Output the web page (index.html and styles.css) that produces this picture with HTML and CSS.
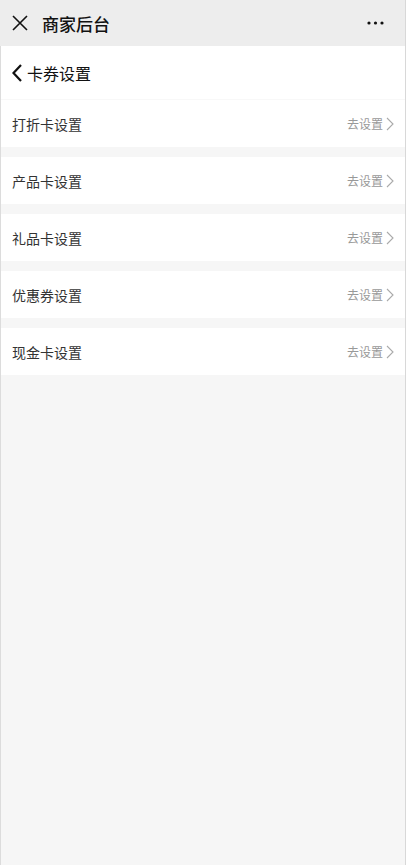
FILE: index.html
```html
<!DOCTYPE html>
<html lang="zh-CN">
  <head>
    <meta charset="UTF-8" />
    <meta name="viewport" content="width=device-width, initial-scale=1.0" />
    <title>商家后台</title>
    <link rel="stylesheet" href="styles.css">
  </head>
  <body>
    <div class="app">
      <div class="top-bar">
        <svg class="close-icon" width="16" height="16" viewBox="0 0 16 16">
          <path d="M1 1 L15 15 M15 1 L1 15" stroke="#111" stroke-width="1.6" fill="none" />
        </svg>
        <span class="top-title">商家后台</span>
        <svg class="more-icon" width="17" height="4" viewBox="0 0 17 4">
          <circle cx="2" cy="2" r="1.6" fill="#111" />
          <circle cx="8.5" cy="2" r="1.6" fill="#111" />
          <circle cx="15" cy="2" r="1.6" fill="#111" />
        </svg>
      </div>
      <div class="content">
        <div class="page-header">
          <svg class="back-icon" width="10" height="18" viewBox="0 0 10 18">
            <path d="M9 1 L1.5 9 L9 17" stroke="#111" stroke-width="2.2" fill="none" />
          </svg>
          <span class="page-title">卡券设置</span>
        </div>
        <div class="setting-list">
          <div class="setting-row">
            <span class="setting-label">打折卡设置</span>
            <span class="setting-link">去设置<svg class="chevron" width="8" height="14" viewBox="0 0 8 14"><path d="M1 1 L7 7 L1 13" stroke="#aaa" stroke-width="1.1" fill="none" /></svg></span>
          </div>
          <div class="setting-row">
            <span class="setting-label">产品卡设置</span>
            <span class="setting-link">去设置<svg class="chevron" width="8" height="14" viewBox="0 0 8 14"><path d="M1 1 L7 7 L1 13" stroke="#aaa" stroke-width="1.1" fill="none" /></svg></span>
          </div>
          <div class="setting-row">
            <span class="setting-label">礼品卡设置</span>
            <span class="setting-link">去设置<svg class="chevron" width="8" height="14" viewBox="0 0 8 14"><path d="M1 1 L7 7 L1 13" stroke="#aaa" stroke-width="1.1" fill="none" /></svg></span>
          </div>
          <div class="setting-row">
            <span class="setting-label">优惠券设置</span>
            <span class="setting-link">去设置<svg class="chevron" width="8" height="14" viewBox="0 0 8 14"><path d="M1 1 L7 7 L1 13" stroke="#aaa" stroke-width="1.1" fill="none" /></svg></span>
          </div>
          <div class="setting-row">
            <span class="setting-label">现金卡设置</span>
            <span class="setting-link">去设置<svg class="chevron" width="8" height="14" viewBox="0 0 8 14"><path d="M1 1 L7 7 L1 13" stroke="#aaa" stroke-width="1.1" fill="none" /></svg></span>
          </div>
        </div>
      </div>
    </div>
  </body>
</html>
```

FILE: styles.css
```css
html,
body {
  margin: 0;
  height: 100%;
}

body {
  font-family: "Noto Sans CJK SC", "Noto Sans", sans-serif;
  background-color: #f6f6f6;
}

.app {
  display: flex;
  flex-direction: column;
  height: 100%;
  border-right: 1px solid #d8d8d8;
  box-sizing: border-box;
}

.top-bar {
  display: flex;
  align-items: center;
  height: 46px;
  padding: 0 21px 0 12px;
  background-color: #ededed;
  flex-shrink: 0;
}

.close-icon {
  display: block;
}

.top-title {
  margin-left: 14px;
  font-size: 17px;
  font-weight: 500;
  color: #111;
  flex: 1;
}

.more-icon {
  display: block;
}

.content {
  flex: 1;
  border-left: 1px solid #dcdcdc;
  background-color: #f6f6f6;
}

.page-header {
  display: flex;
  align-items: center;
  height: 53px;
  padding-left: 11px;
  background-color: #fff;
  border-bottom: 1px solid #f8f8f8;
}

.back-icon {
  display: block;
}

.page-title {
  margin-left: 5px;
  font-size: 16px;
  color: #111;
}

.setting-list {
  display: flex;
  flex-direction: column;
  gap: 10px;
}

.setting-row {
  display: flex;
  align-items: center;
  justify-content: space-between;
  height: 47px;
  padding: 0 11px;
  background-color: #fff;
}

.setting-label {
  font-size: 14px;
  color: #333;
}

.setting-link {
  display: flex;
  align-items: center;
  font-size: 12px;
  color: #999;
}

.chevron {
  display: block;
  margin-left: 3px;
}
```
